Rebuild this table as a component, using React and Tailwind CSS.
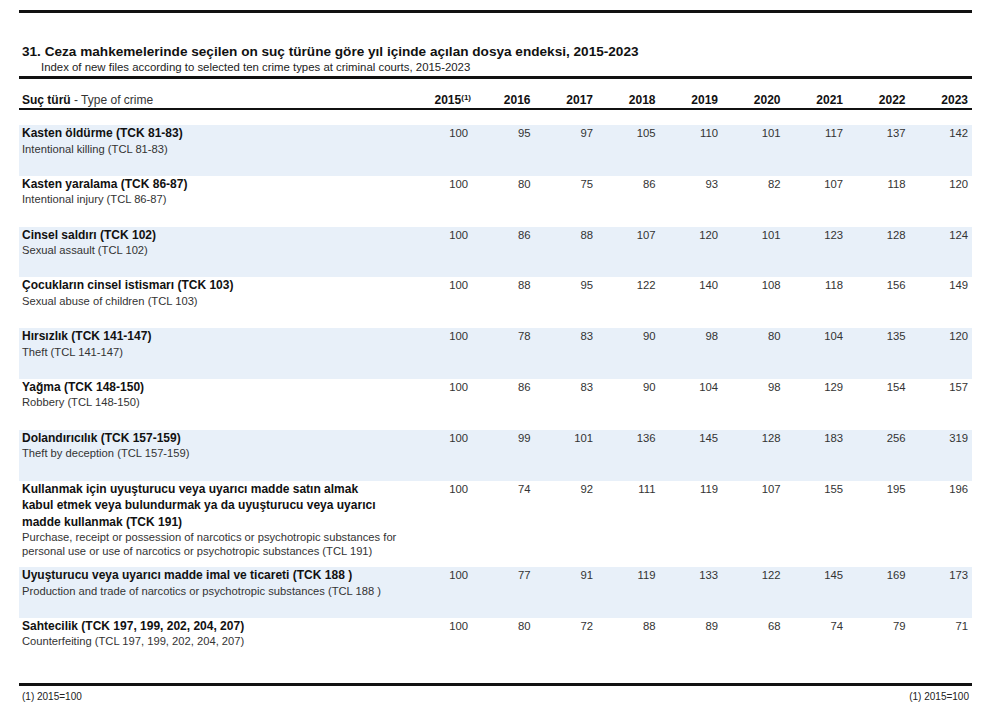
import React from "react";

const years = ["2016", "2017", "2018", "2019", "2020", "2021", "2022", "2023"];

const rows = [
  { tr: ["Kasten öldürme (TCK 81-83)"], en: ["Intentional killing (TCL 81-83)"], v: [100, 95, 97, 105, 110, 101, 117, 137, 142] },
  { tr: ["Kasten yaralama (TCK 86-87)"], en: ["Intentional injury (TCL 86-87)"], v: [100, 80, 75, 86, 93, 82, 107, 118, 120] },
  { tr: ["Cinsel saldırı (TCK 102)"], en: ["Sexual assault (TCL 102)"], v: [100, 86, 88, 107, 120, 101, 123, 128, 124] },
  { tr: ["Çocukların cinsel istismarı (TCK 103)"], en: ["Sexual abuse of children (TCL 103)"], v: [100, 88, 95, 122, 140, 108, 118, 156, 149] },
  { tr: ["Hırsızlık (TCK 141-147)"], en: ["Theft (TCL 141-147)"], v: [100, 78, 83, 90, 98, 80, 104, 135, 120] },
  { tr: ["Yağma (TCK 148-150)"], en: ["Robbery (TCL 148-150)"], v: [100, 86, 83, 90, 104, 98, 129, 154, 157] },
  { tr: ["Dolandırıcılık (TCK 157-159)"], en: ["Theft by deception (TCL 157-159)"], v: [100, 99, 101, 136, 145, 128, 183, 256, 319] },
  {
    tr: [
      "Kullanmak için uyuşturucu veya uyarıcı madde satın almak",
      "kabul etmek veya bulundurmak ya da uyuşturucu veya uyarıcı",
      "madde kullanmak (TCK 191)",
    ],
    en: [
      "Purchase, receipt or possession of narcotics or psychotropic substances for",
      "personal use or use of narcotics or psychotropic substances (TCL 191)",
    ],
    v: [100, 74, 92, 111, 119, 107, 155, 195, 196],
  },
  { tr: ["Uyuşturucu veya uyarıcı madde imal ve ticareti (TCK 188 )"], en: ["Production and trade of narcotics or psychotropic substances (TCL 188 )"], v: [100, 77, 91, 119, 133, 122, 145, 169, 173] },
  { tr: ["Sahtecilik (TCK 197, 199, 202, 204, 207)"], en: ["Counterfeiting (TCL 197, 199, 202, 204, 207)"], v: [100, 80, 72, 88, 89, 68, 74, 79, 71] },
];

const cols = "grid grid-cols-[389.5px_repeat(9,62.5px)]";

export default function App() {
  return (
    <div className="h-[721px] w-[982px] bg-white font-['Liberation_Sans',Arial,sans-serif] text-[#1a1a1a]">
      <div className="ml-[19px] w-[953px] pt-[10px]">
        <div className="h-[3px] bg-[#111]" />

        <div className="mt-[31px] whitespace-nowrap pl-[3px] text-[13.6px] font-bold leading-[16px] text-[#111]">
          31. Ceza mahkemelerinde seçilen on suç türüne göre yıl içinde açılan dosya endeksi, 2015-2023
        </div>
        <div className="whitespace-nowrap pl-[22px] text-[11.4px] leading-[15px] text-[#222]">
          Index of new files according to selected ten crime types at criminal courts, 2015-2023
        </div>
        <div className="mt-[1px] h-[3px] bg-[#111]" />

        <div className={`${cols} mt-[13px] h-[18px] items-center border-b-2 border-[#111] text-[12px] leading-[16px]`}>
          <div className="pl-[3px]">
            <span className="font-bold text-[#111]">Suç türü</span>
            <span className="text-[#333]"> - Type of crime</span>
          </div>
          <div className="text-right font-bold text-[#111]">
            2015<sup className="text-[8px]">(1)</sup>
          </div>
          {years.map((y) => (
            <div key={y} className="pr-[3px] text-right font-bold text-[#111]">
              {y}
            </div>
          ))}
        </div>

        <div className="mt-[15px]">
          {rows.map((r, i) => (
            <div
              key={r.tr[0]}
              className={`${cols} min-h-[50.8px] pb-[9px] ${i % 2 === 0 ? "bg-[#e8f0f9]" : "bg-white"}`}
            >
              <div className="whitespace-nowrap pl-[3px]">
                {r.tr.map((t) => (
                  <div key={t} className="text-[12px] font-bold leading-[16.5px] text-[#111]">
                    {t}
                  </div>
                ))}
                {r.en.map((t) => (
                  <div key={t} className="text-[11.2px] leading-[14px] text-[#333]">
                    {t}
                  </div>
                ))}
              </div>
              {r.v.map((n, j) => (
                <div key={j} className="pr-[3px] text-right text-[11.3px] leading-[16.5px] text-[#333]">
                  {n}
                </div>
              ))}
            </div>
          ))}
        </div>

        <div className="mt-[14px] h-[3px] bg-[#111]" />
        <div className="flex justify-between px-[3px] pt-[4px] text-[10px] leading-[13px] text-[#222]">
          <span>(1) 2015=100</span>
          <span>(1) 2015=100</span>
        </div>
      </div>
    </div>
  );
}
